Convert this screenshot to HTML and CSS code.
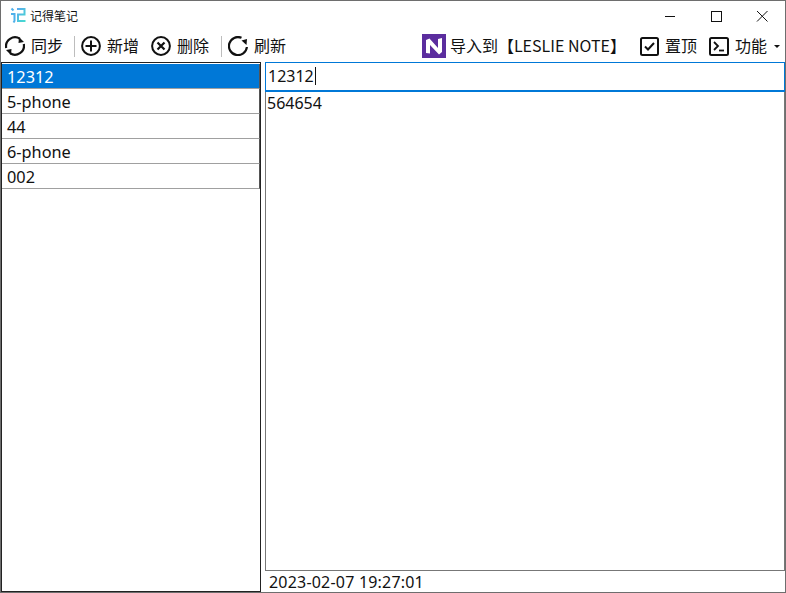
FILE: index.html
```html
<!DOCTYPE html>
<html lang="zh">
<head>
<meta charset="utf-8">
<title>记得笔记</title>
<link rel="stylesheet" href="styles.css">
</head>
<body>
<div class="window">
  <header class="titlebar">
    <svg class="app-icon" width="16" height="17" viewBox="0 0 16 17"><defs><linearGradient id="g" x1="0" y1="0" x2="1" y2="1"><stop offset="0" stop-color="#5aa8ee"/><stop offset="1" stop-color="#45dccf"/></linearGradient></defs><path d="M1.500 1.500l2 2M1 7h3.500v7l-1 1.500" fill="none" stroke="#4fb0ea" stroke-width="2"/><path d="M7 2h7.500v5.500H8v6.500h7.500" fill="none" stroke="url(#g)" stroke-width="2"/></svg>
    <span class="app-title">记得笔记</span>
    <div class="win-controls">
      <svg width="46" height="30" viewBox="0 0 46 30"><path d="M18 15.500h10" stroke="#111" fill="none"/></svg>
      <svg width="46" height="30" viewBox="0 0 46 30"><rect x="18.500" y="10.500" width="10" height="10" stroke="#111" fill="none"/></svg>
      <svg width="46" height="30" viewBox="0 0 46 30"><path d="M18 10l10.500 10.500M28.500 10L18 20.500" stroke="#111" fill="none"/></svg>
    </div>
  </header>
  <nav class="toolbar">
    <button class="tool tool-sync">
      <svg width="20" height="20" viewBox="0 0 20 20"><path d="M1.200 12A9 9 0 0 1 15 2.800" fill="none" stroke="#111" stroke-width="2.200"/><path d="M18.800 8A9 9 0 0 1 5 17.200" fill="none" stroke="#111" stroke-width="2.200"/><path d="M14 1l5 5-5.500 1zM6 19l-5-5 5.500-1z" fill="#111"/></svg>
      <span>同步</span>
    </button>
    <i class="sep"></i>
    <button class="tool">
      <svg width="20" height="20" viewBox="0 0 20 20"><circle cx="10" cy="10" r="8.900" fill="none" stroke="#111" stroke-width="2"/><path d="M10 4.500v11M4.500 10h11" stroke="#111" stroke-width="2"/></svg>
      <span>新增</span>
    </button>
    <button class="tool">
      <svg width="20" height="20" viewBox="0 0 20 20"><circle cx="10" cy="10" r="8.900" fill="none" stroke="#111" stroke-width="2"/><path d="M6.500 6.500l7 7M13.500 6.500l-7 7" stroke="#111" stroke-width="2.200"/></svg>
      <span>删除</span>
    </button>
    <i class="sep"></i>
    <button class="tool">
      <svg width="20" height="20" viewBox="0 0 20 20"><path d="M18.900 11A9 9 0 1 1 13.500 1.800" fill="none" stroke="#111" stroke-width="2.200"/><path d="M13.500 4.500l5.500-1.500-.5 6z" fill="#111"/></svg>
      <span>刷新</span>
    </button>
    <div class="spacer"></div>
    <button class="tool tool-import">
      <svg width="24" height="24" viewBox="0 0 24 24"><rect width="24" height="24" fill="#5b2d9e"/><path d="M4 19V6l3.500-1.500L16 14V5l4-1v14l-3 2.500L8 11v8.500z" fill="#fff"/></svg>
      <span>导入到【LESLIE NOTE】</span>
    </button>
    <button class="tool">
      <svg width="19" height="19" viewBox="0 0 19 19"><rect x="1" y="1" width="17" height="17" rx="1.500" fill="none" stroke="#111" stroke-width="2"/><path d="M5 9.500l3 3 6-6.500" fill="none" stroke="#111" stroke-width="2"/></svg>
      <span>置顶</span>
    </button>
    <button class="tool tool-func">
      <svg width="20" height="19" viewBox="0 0 20 19"><rect x="1" y="1" width="18" height="17" rx="1.500" fill="none" stroke="#111" stroke-width="2"/><path d="M5 5l4 4-4 4" fill="none" stroke="#111" stroke-width="1.800"/><path d="M10 13.500h5" stroke="#111" stroke-width="1.800"/></svg>
      <span>功能</span>
      <i class="caret"></i>
    </button>
  </nav>
  <main class="content">
    <ul class="note-list">
      <li class="note selected">12312</li>
      <li class="note">5-phone</li>
      <li class="note">44</li>
      <li class="note">6-phone</li>
      <li class="note">002</li>
    </ul>
    <section class="editor">
      <div class="title-input">12312<i class="cursor"></i></div>
      <div class="body-text">564654</div>
      <div class="timestamp">2023-02-07 19:27:01</div>
    </section>
  </main>
</div>
</body>
</html>
```

FILE: styles.css
```css
* { box-sizing: border-box; }
html, body { margin: 0; padding: 0; height: 100%; }
body { background: #fff; overflow: hidden; }
.window {
  width: 786px;
  height: 593px;
  display: flex;
  flex-direction: column;
  background: #fff;
  border: 1px solid #6e6e6e;
  font-family: "Noto Sans", "Noto Sans CJK SC", sans-serif;
  font-size: 16px;
  color: #111;
}
.titlebar {
  height: 29px;
  flex: none;
  display: flex;
  align-items: center;
  padding-left: 9px;
}
.app-title {
  margin-left: 4px;
  font-size: 12px;
  line-height: 16px;
  font-family: "Noto Sans CJK SC", sans-serif;
}
.win-controls { margin-left: auto; display: flex; }
.win-controls svg { display: block; }
.toolbar {
  height: 32px;
  flex: none;
  display: flex;
  align-items: center;
  padding-left: 4px;
  padding-right: 5px;
}
.tool {
  display: flex;
  align-items: center;
  gap: 6px;
  border: 0;
  padding: 0;
  background: none;
  font-family: "Noto Sans CJK SC", "Noto Sans", sans-serif;
  font-size: 16px;
  line-height: 20px;
  color: #111;
  margin-right: 12px;
}
.tool span { position: relative; top: -1px; }
.tool svg { flex: none; display: block; }
.tool-sync { margin-right: 11px; }
.tool-import { gap: 4px; margin-right: 14px; }
.tool-func { margin-right: 0; }
.sep { width: 1px; height: 21px; background: #bdbdbd; margin-right: 6px; }
.spacer { flex: 1; }
.caret {
  width: 0; height: 0;
  border-left: 3px solid transparent;
  border-right: 3px solid transparent;
  border-top: 3px solid #111;
  margin-left: 1px;
}
.content {
  flex: 1;
  min-height: 0;
  display: flex;
  gap: 4px;
}
.note-list {
  width: 260px;
  margin: 0;
  padding: 1px 0 0 0;
  list-style: none;
  border: 1px solid #222;
  flex: none;
  font-size: 16.300px;
}
.note {
  height: 25px;
  line-height: 26px;
  padding-left: 5px;
  border-right: 1px solid #555;
  border-bottom: 1px solid #a0a0a0;
}
.note.selected {
  background: #0078d7;
  color: #fff;
}
.editor {
  flex: 1;
  min-width: 0;
  display: flex;
  flex-direction: column;
}
.title-input {
  height: 30px;
  flex: none;
  border: 1px solid #0078d7;
  border-bottom-width: 2px;
  line-height: 24px;
  padding: 0 0 2px 2px;
  display: flex;
  align-items: center;
}
.cursor { display: block; width: 1px; height: 18px; background: #111; margin-left: 1px; }
.body-text {
  flex: 1;
  min-height: 0;
  padding: 0 1px;
  border: 1px solid #777;
  border-top: 0;
  line-height: 22px;
}
.timestamp {
  height: 21px;
  flex: none;
  padding-left: 4px;
  line-height: 22px;
  letter-spacing: 0.2px;
}
```
